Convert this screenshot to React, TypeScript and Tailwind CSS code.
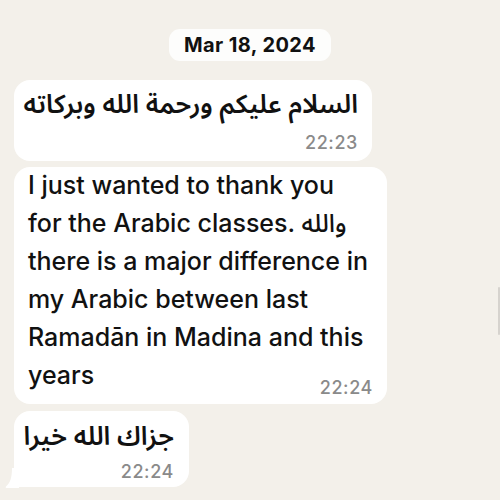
import React from "react";

const latin = { fontFamily: '"Inter", "Liberation Sans", sans-serif' };
const arabic = {
  fontFamily: '"Noto Sans Arabic", "Noto Naskh Arabic", "DejaVu Sans", sans-serif',
};

function Time({ t }: { t: string }) {
  return (
    <div
      className="text-right text-[18px] leading-[24px] font-medium tracking-[0.6px] text-[#8a8a8a]"
      style={latin}
    >
      {t}
    </div>
  );
}

export default function App() {
  return (
    <div className="relative w-[500px] h-[500px] overflow-hidden bg-[#f3f0ea]">
      {/* date chip */}
      <div className="flex justify-center pt-[29px]">
        <div
          className="h-[32px] w-[162px] flex items-center justify-center rounded-[11px] bg-[#fdfdfc] text-[20px] font-bold tracking-[0.4px] text-[#111]"
          style={latin}
        >
          Mar 18, 2024
        </div>
      </div>

      <div className="flex flex-col items-start pl-[14px] pt-[19px]">
        {/* first message */}
        <div className="w-[358px] rounded-[16px] bg-white pl-[10px] pr-[14px] pt-[2px] pb-[6px]">
          <div
            dir="rtl"
            className="whitespace-nowrap text-[26px] leading-[46px] font-semibold text-[#111]"
            style={arabic}
          >
            السلام عليكم ورحمة الله وبركاته
          </div>
          <div className="mt-[3px]">
            <Time t="22:23" />
          </div>
        </div>

        {/* second message */}
        <div className="mt-[6px] w-[373px] rounded-[16px] bg-white pl-[14px] pr-[10px] pt-0 pb-[4px]">
          <div
            className="whitespace-nowrap text-[25px] leading-[37.7px] font-medium text-[#111]"
            style={latin}
          >
            I just wanted to thank you
            <br />
            for the Arabic classes. <span style={arabic}>والله</span>
            <br />
            there is a major difference in
            <br />
            my Arabic between last
            <br />
            Ramadān in Madina and this
            <br />
            years
          </div>
          <div className="-mt-[18px] pr-[4px]">
            <Time t="22:24" />
          </div>
        </div>

        {/* third message with tail */}
        <div className="relative mt-[7px] w-[175px] rounded-[16px] rounded-bl-none bg-white pl-[10px] pr-[15px] pt-[4px] pb-[3px]">
          <svg
            className="absolute -left-[9px] bottom-[-1px]"
            width="14"
            height="20"
            viewBox="0 0 14 20"
          >
            <path d="M14 0 L14 20 L3 20 C1 20 0 19.5 1 18.5 C5 15 7 10 7 0 Z" fill="#fff" />
          </svg>
          <div
            dir="rtl"
            className="whitespace-nowrap text-[26px] leading-[44px] font-semibold text-[#111]"
            style={arabic}
          >
            جزاك الله خيرا
          </div>
          <div className="mt-[1px]">
            <Time t="22:24" />
          </div>
        </div>
      </div>

      {/* scroll indicator */}
      <div className="absolute right-0 top-[287px] h-[48px] w-[2px] rounded-full bg-[#d6d3ce]" />
    </div>
  );
}
